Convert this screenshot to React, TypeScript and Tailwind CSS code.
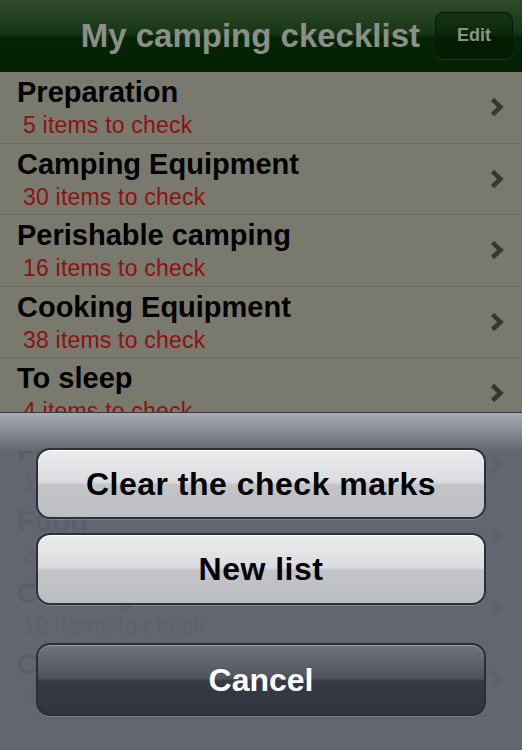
import React from "react";

const rows = [
  { title: "Preparation", count: 5 },
  { title: "Camping Equipment", count: 30 },
  { title: "Perishable camping", count: 16 },
  { title: "Cooking Equipment", count: 38 },
  { title: "To sleep", count: 4 },
  { title: "Perishable food", count: 12 },
  { title: "Food", count: 34 },
  { title: "Clothing - 1", count: 19 },
  { title: "Clothing - 2", count: 8 },
];

const Chevron = () => (
  <svg width="16" height="22" viewBox="0 0 16 22" className="shrink-0">
    <polyline
      points="3.5,3.5 11.5,11 3.5,18.5"
      fill="none"
      stroke="#37372f"
      strokeWidth="4.5"
      strokeLinejoin="miter"
    />
  </svg>
);

export default function App() {
  return (
    <div
      className="relative h-[750px] w-[522px] overflow-hidden bg-[#7a796e]"
      style={{ fontFamily: '"Liberation Sans", Arial, sans-serif' }}
    >
      <header className="flex h-[72px] items-center justify-end gap-[15px] border-b border-[#0a1608] bg-[linear-gradient(#304b2c,#173515_48%,#062506_52%,#012000)] pr-[9px]">
        <h1 className="text-[33px] font-bold leading-none text-[#8b8f88]">
          My camping ckecklist
        </h1>
        <button className="flex h-[47px] w-[78px] items-center justify-center rounded-[8px] border border-[#041803] bg-[linear-gradient(#153212,#0a2708_50%,#031e03_51%,#021a02)] text-[18px] font-bold text-[#8d9389] shadow-[0_1px_0_rgba(120,140,110,0.25)]">
          Edit
        </button>
      </header>

      <ul>
        {rows.map((row) => (
          <li
            key={row.title}
            className="flex h-[71.5px] items-center justify-between border-b border-[#6b6a60] pl-[17px] pr-[17px]"
          >
            <div className="self-start pt-[6px]">
              <div className="text-[29px] font-bold leading-none text-black">
                {row.title}
              </div>
              <div className="mt-[7px] pl-[6px] text-[23px] leading-none tracking-[0.2px] text-[#8b1212]">
                {row.count} items to check
              </div>
            </div>
            <Chevron />
          </li>
        ))}
      </ul>

      <div className="absolute inset-x-0 bottom-0 top-[412px] border-t border-[#3a3c41] bg-[rgba(97,101,112,0.94)]">
        <div className="absolute inset-x-0 top-0 h-[38px] bg-[linear-gradient(rgba(170,174,182,0.96),rgba(122,126,136,0.94)_70%,rgba(100,104,114,0.94))]" />
        <div className="relative flex flex-col px-[36px] pt-[35px]">
          <button className="h-[71px] rounded-[14px] border-2 border-[#2e3139] bg-[linear-gradient(#ececee,#dcdce0_48%,#c3c4c8_52%,#bdbec2)] text-[32px] font-bold tracking-[0.5px] text-black shadow-[inset_0_1px_0_#fff,0_1px_0_rgba(150,155,165,0.5)]">
            Clear the check marks
          </button>
          <button className="mt-[14px] h-[72px] rounded-[14px] border-2 border-[#2e3139] bg-[linear-gradient(#ececee,#dcdce0_48%,#c3c4c8_52%,#bdbec2)] text-[32px] font-bold tracking-[0.5px] text-black shadow-[inset_0_1px_0_#fff,0_1px_0_rgba(150,155,165,0.5)]">
            New list
          </button>
          <button className="mt-[38px] h-[73px] rounded-[14px] border-2 border-[#2b2e35] bg-[linear-gradient(#6f737c,#50545e_48%,#363a45_52%,#30343e)] text-[32px] font-bold text-white shadow-[inset_0_1px_0_rgba(170,175,185,0.7),0_1px_0_rgba(150,155,165,0.4)]">
            Cancel
          </button>
        </div>
      </div>
    </div>
  );
}
